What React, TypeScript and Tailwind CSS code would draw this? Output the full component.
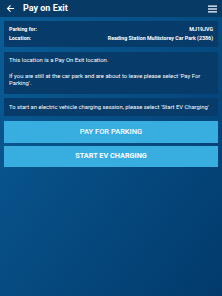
import React from "react";

function BackArrow() {
  return (
    <svg width="9" height="9" viewBox="0 0 24 24" fill="none" stroke="white" strokeWidth="3" strokeLinecap="square">
      <path d="M20 12H5M11 5l-7 7 7 7" />
    </svg>
  );
}

function Menu() {
  return (
    <svg width="9" height="8" viewBox="0 0 18 16" fill="white">
      <rect x="0" y="1" width="18" height="2.5" />
      <rect x="0" y="6.75" width="18" height="2.5" />
      <rect x="0" y="12.5" width="18" height="2.5" />
    </svg>
  );
}

export default function App() {
  return (
    <div
      className="w-[222px] h-[296px] overflow-hidden flex flex-col bg-gradient-to-br from-[#0b5e98] to-[#033a6c] text-white"
      style={{ fontFamily: "Roboto, 'Noto Sans', sans-serif" }}
    >
      <header className="h-[17px] shrink-0 bg-[#083a66] flex items-center pl-[6px] pr-[5px]">
        <BackArrow />
        <span className="ml-[8px] text-[9px] font-bold leading-none">Pay on Exit</span>
        <span className="ml-auto">
          <Menu />
        </span>
      </header>

      <div className="flex flex-col px-[4px] pt-[4px]">
        <section className="h-[26px] bg-[#073b69] px-[5px] py-[4px] text-[5.3px] font-bold leading-[9px]">
          <div className="flex justify-between">
            <span>Parking for:</span>
            <span>MJ19JVG</span>
          </div>
          <div className="flex justify-between">
            <span>Location:</span>
            <span>Reading Station Multistorey Car Park (2386)</span>
          </div>
        </section>

        <section className="mt-[5px] h-[42px] bg-[#073b69] px-[5px] pt-[5px] text-[5.9px] leading-[7.5px]">
          <p>This location is a Pay On Exit location.</p>
          <p className="mt-[8px]">
            If you are still at the car park and are about to leave please select 'Pay For Parking'.
          </p>
        </section>

        <section className="mt-[4px] h-[18px] bg-[#073b69] px-[5px] flex items-center text-[5.85px] leading-[8px] whitespace-nowrap">
          <p>To start an electric vehicle charging session, please select 'Start EV Charging'</p>
        </section>

        <button className="mt-[5px] h-[22px] bg-[#38ade0] text-[7.5px] font-medium flex items-center justify-center">
          PAY FOR PARKING
        </button>
        <button className="mt-[3px] h-[21px] bg-[#38ade0] text-[7.3px] font-bold flex items-center justify-center">
          START EV CHARGING
        </button>
      </div>
    </div>
  );
}
